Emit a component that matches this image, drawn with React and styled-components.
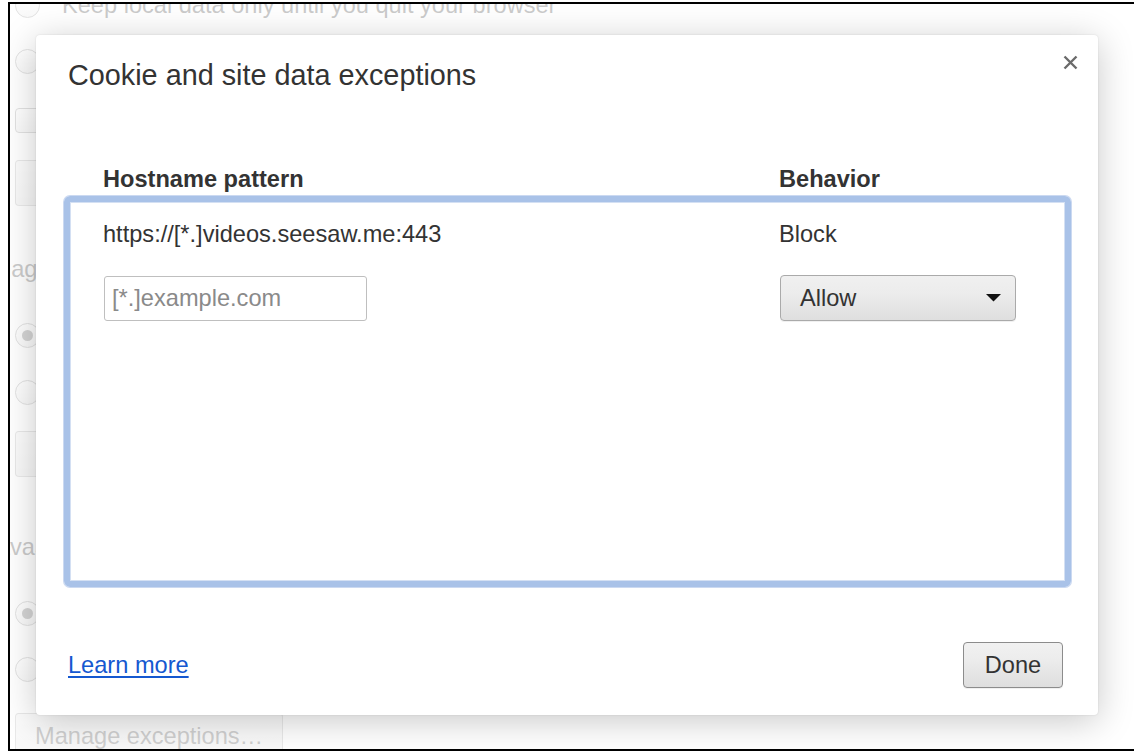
import React from 'react';
import styled, { createGlobalStyle } from 'styled-components';

const GlobalStyle = createGlobalStyle`
  html, body { margin: 0; padding: 0; background: #fff; }
  body {
    padding: 2px 0 0 8px;
    font-family: "Liberation Sans", Arial, Helvetica, sans-serif;
    overflow: hidden;
  }
  * { box-sizing: border-box; }
`;

const Frame = styled.div`
  position: relative;
  width: 1126px;
  height: 749px;
  border: 2px solid #000;
  border-right: none;
  overflow: hidden;
  background: #fff;
`;

/* ---------- settings page behind the dialog ---------- */

const Page = styled.div`
  display: flex;
  flex-direction: column;
  margin-top: -27px;
  padding-left: 5px;
  font-size: 23.6px;
  color: #303030;
`;

const Section = styled.section`
  display: flex;
  flex-direction: column;
  margin-top: ${(p) => p.$gap || 0}px;
`;

const SectionTitle = styled.h3`
  margin: 0 0 24px -30px;
  font-size: 23.6px;
  font-weight: normal;
  line-height: 27px;
  white-space: nowrap;
`;

const OptionRow = styled.label`
  display: flex;
  align-items: center;
  height: ${(p) => p.$h || 56}px;
  gap: 22px;
  white-space: nowrap;
`;

const Radio = styled.span`
  width: 25px;
  height: 25px;
  border-radius: 50%;
  border: 1px solid #8c8c8c;
  background: linear-gradient(#fdfdfd, #e6e6e6);
  display: flex;
  align-items: center;
  justify-content: center;
  flex: none;
  &::after {
    content: '';
    display: ${(p) => (p.$checked ? 'block' : 'none')};
    width: 11px;
    height: 11px;
    border-radius: 50%;
    background: #555;
  }
`;

const Checkbox = styled.span`
  width: 25px;
  height: 25px;
  border-radius: 4px;
  border: 1px solid #8c8c8c;
  background: linear-gradient(#fdfdfd, #e6e6e6);
  flex: none;
`;

const ButtonRow = styled.div`
  display: flex;
  gap: 10px;
  margin-top: ${(p) => p.$gap || 0}px;
`;

const PageButton = styled.button`
  height: 46px;
  padding: 0 19px;
  border: 1px solid rgba(0, 0, 0, 0.28);
  border-radius: 4px;
  background: linear-gradient(#f0f0f0, #e2e2e2);
  font: inherit;
  color: #444;
  white-space: nowrap;
`;

const Overlay = styled.div`
  position: absolute;
  inset: 0;
  background: rgba(255, 255, 255, 0.75);
`;

/* ---------- dialog ---------- */

const Dialog = styled.div`
  position: absolute;
  left: 26px;
  top: 31px;
  width: 1062px;
  height: 680px;
  background: #fff;
  border-radius: 4px;
  box-shadow: 0 6px 36px rgba(0, 0, 0, 0.22), 0 0 2px rgba(0, 0, 0, 0.12);
  display: flex;
  flex-direction: column;
  padding: 23px 26px 27px 27px;
  color: #333;
  font-size: 23.6px;
`;

const Title = styled.h1`
  margin: 0 0 0 5px;
  font-size: 28.8px;
  font-weight: normal;
  line-height: 34px;
  color: #333;
`;

const CloseButton = styled.button`
  position: absolute;
  top: 20px;
  right: 20px;
  width: 15px;
  height: 15px;
  padding: 0;
  border: 0;
  background: none;
  display: flex;
`;

const ColumnHeaders = styled.div`
  display: grid;
  grid-template-columns: 676px 1fr;
  margin: 74px 0 3px;
  padding-left: 40px;
  font-weight: bold;
  line-height: 27px;
`;

const List = styled.div`
  height: 391px;
  margin: 0 1px;
  border: 6px solid #a9c2e8;
  border-radius: 6px;
  box-shadow: 0 0 0 1px #cbd9f1, inset 0 0 0 1px #d4e0f3;
  padding: 19px 0 0 33px;
  display: flex;
  flex-direction: column;
  gap: 27px;
`;

const Row = styled.div`
  display: grid;
  grid-template-columns: 676px auto;
  align-items: center;
  line-height: 27px;
`;

const PatternInput = styled.input`
  width: 263px;
  height: 45px;
  margin-left: 1px;
  border: 1px solid #bfbfbf;
  border-radius: 3px;
  padding: 0 7px;
  font: inherit;
  color: #333;
  outline: none;
  &::placeholder { color: #8a8a8a; }
`;

const SelectBox = styled.div`
  width: 236px;
  height: 46px;
  margin-left: 1px;
  border: 1px solid #aaaaaa;
  border-radius: 4px;
  background: linear-gradient(#f0f0f0, #ececec 40%, #dfdfdf);
  box-shadow: 0 1px 0 rgba(0, 0, 0, 0.06);
  display: flex;
  align-items: center;
  justify-content: space-between;
  padding: 0 14px 0 19px;
  color: #333;
`;

const Footer = styled.div`
  margin-top: auto;
  display: flex;
  justify-content: space-between;
  align-items: center;
  padding: 0 9px 0 5px;
`;

const LearnMore = styled.a`
  color: #1558d0;
  text-decoration: underline;
  text-underline-offset: 3px;
`;

const DoneButton = styled.button`
  width: 100px;
  height: 46px;
  border: 1px solid #8c8c8c;
  border-radius: 4px;
  background: linear-gradient(#f1f1f1, #ececec 40%, #dedede);
  box-shadow: 0 1px 0 rgba(0, 0, 0, 0.06);
  font: inherit;
  color: #333;
  padding: 0;
`;

const Arrow = () => (
  <svg width="15" height="8" viewBox="0 0 15 8">
    <path d="M0 0 L15 0 L7.5 7.5 Z" fill="#111" />
  </svg>
);

const CloseIcon = () => (
  <svg width="15" height="15" viewBox="0 0 15 15">
    <path d="M1.5 1.5 L13.5 13.5 M13.5 1.5 L1.5 13.5" stroke="#6b6b6b" strokeWidth="2.4" strokeLinecap="butt" />
  </svg>
);

export default function App() {
  return (
    <>
      <GlobalStyle />
      <Frame>
        <Page>
          <Section>
            <OptionRow><Radio /><span>Keep local data only until you quit your browser</span></OptionRow>
            <OptionRow><Radio /><span>Block sites from setting any data</span></OptionRow>
            <OptionRow $h={62}><Checkbox /><span>Block third-party cookies and site data</span></OptionRow>
            <ButtonRow $gap={9}>
              <PageButton>Manage exceptions…</PageButton>
              <PageButton>All cookies and site data…</PageButton>
            </ButtonRow>
          </Section>
          <Section $gap={50}>
            <SectionTitle>Images</SectionTitle>
            <OptionRow $h={57}><Radio $checked /><span>Show all images (recommended)</span></OptionRow>
            <OptionRow $h={57}><Radio /><span>Do not show any images</span></OptionRow>
            <ButtonRow $gap={10}>
              <PageButton>Manage exceptions…</PageButton>
            </ButtonRow>
          </Section>
          <Section $gap={57}>
            <SectionTitle>JavaScript</SectionTitle>
            <OptionRow><Radio $checked /><span>Allow all sites to run JavaScript (recommended)</span></OptionRow>
            <OptionRow><Radio /><span>Do not allow any site to run JavaScript</span></OptionRow>
            <ButtonRow $gap={16}>
              <PageButton>Manage exceptions…</PageButton>
            </ButtonRow>
          </Section>
        </Page>
        <Overlay />
        <Dialog>
          <Title>Cookie and site data exceptions</Title>
          <CloseButton aria-label="Close"><CloseIcon /></CloseButton>
          <ColumnHeaders>
            <span>Hostname pattern</span>
            <span>Behavior</span>
          </ColumnHeaders>
          <List>
            <Row>
              <span>https://[*.]videos.seesaw.me:443</span>
              <span>Block</span>
            </Row>
            <Row>
              <PatternInput placeholder="[*.]example.com" />
              <SelectBox>
                <span>Allow</span>
                <Arrow />
              </SelectBox>
            </Row>
          </List>
          <Footer>
            <LearnMore href="#">Learn more</LearnMore>
            <DoneButton>Done</DoneButton>
          </Footer>
        </Dialog>
      </Frame>
    </>
  );
}
